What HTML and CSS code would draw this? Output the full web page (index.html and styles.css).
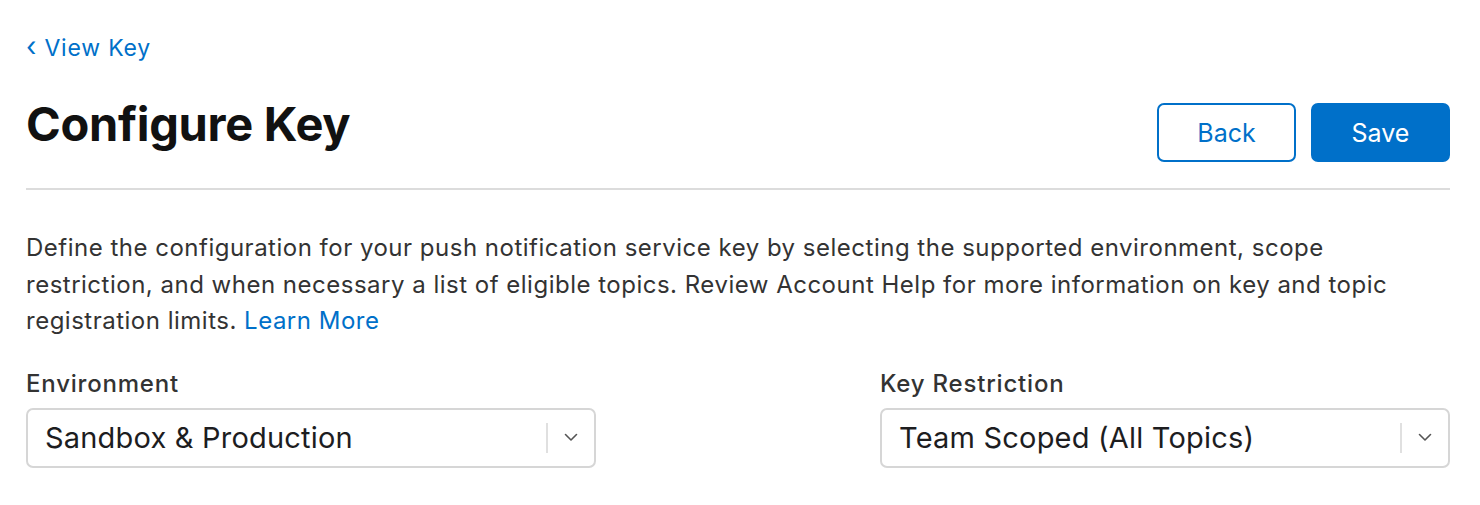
FILE: index.html
```html
<!DOCTYPE html>
<html lang="en">
<head>
<meta charset="utf-8">
<title>Configure Key</title>
<link rel="stylesheet" href="styles.css">
</head>
<body>
<main class="page">
  <a class="back-link" href="#"><span class="chev">‹</span> View Key</a>
  <header class="page-header">
    <h1 class="title">Configure Key</h1>
    <div class="actions">
      <button class="btn btn-secondary">Back</button>
      <button class="btn btn-primary">Save</button>
    </div>
  </header>
  <p class="intro">Define the configuration for your push notification service key by selecting the supported environment, scope restriction, and when necessary a list of eligible topics. Review Account Help for more information on key and topic registration limits. <a class="link" href="#">Learn More</a></p>
  <div class="fields">
    <div class="field">
      <label class="field-label">Environment</label>
      <div class="select">
        <span class="select-value">Sandbox &amp; Production</span>
        <span class="select-sep"></span>
        <svg class="select-chev" width="14" height="9" viewBox="0 0 14 9"><path d="M1.5 1.5 L7 7 L12.5 1.5" fill="none" stroke="#555" stroke-width="1.6" stroke-linecap="round" stroke-linejoin="round"/></svg>
      </div>
    </div>
    <div class="field">
      <label class="field-label">Key Restriction</label>
      <div class="select">
        <span class="select-value">Team Scoped (All Topics)</span>
        <span class="select-sep"></span>
        <svg class="select-chev" width="14" height="9" viewBox="0 0 14 9"><path d="M1.5 1.5 L7 7 L12.5 1.5" fill="none" stroke="#555" stroke-width="1.6" stroke-linecap="round" stroke-linejoin="round"/></svg>
      </div>
    </div>
  </div>
</main>
</body>
</html>
```
FILE: styles.css
```css
* { box-sizing: border-box; }
html, body { margin: 0; background: #fff; }
body {
  font-family: Inter, "Noto Sans", "Liberation Sans", sans-serif;
  color: #333;
}
.page {
  padding: 30px 30px 0 26px;
}
.back-link {
  display: inline-block;
  font-size: 23px;
  line-height: 34px;
  letter-spacing: 0.8px;
  color: #0070c9;
  text-decoration: none;
}
.chev { font-size: 27px; }
.page-header {
  display: flex;
  justify-content: space-between;
  align-items: flex-start;
  margin-top: 38px;
  padding-bottom: 26px;
  border-bottom: 2px solid #dcdcdc;
}
.title {
  margin: 0;
  font-size: 47px;
  font-weight: 700;
  color: #111;
  line-height: 42px;
  letter-spacing: -0.3px;
}
.actions { display: flex; gap: 15px; }
.btn {
  width: 139px;
  height: 59px;
  border-radius: 7px;
  font-family: inherit;
  font-size: 25px;
  cursor: pointer;
}
.btn-secondary {
  background: #fff;
  color: #0070c9;
  border: 2px solid #0070c9;
}
.btn-primary {
  background: #0070c9;
  color: #fff;
  border: 2px solid #0070c9;
}
.intro {
  margin: 40px 0 0;
  font-size: 24px;
  line-height: 36.5px;
  letter-spacing: 0.5px;
  color: #333;
}
.link { color: #0070c9; text-decoration: none; }
.fields {
  display: flex;
  justify-content: space-between;
  margin-top: 27px;
}
.field { width: 570px; }
.field-label {
  display: block;
  font-size: 24px;
  font-weight: 500;
  line-height: 34px;
  letter-spacing: 0.8px;
  color: #333;
  margin-bottom: 7px;
}
.select {
  display: flex;
  align-items: center;
  height: 60px;
  border: 2px solid #d6d6d6;
  border-radius: 7px;
  padding-left: 17px;
}
.select-value {
  flex: 1;
  font-size: 29px;
  letter-spacing: 0.2px;
  color: #1d1d1f;
}
.select-sep {
  width: 2px;
  height: 30px;
  background: #e0e0e0;
}
.select-chev { margin: 0 16px 0 16px; }
```
